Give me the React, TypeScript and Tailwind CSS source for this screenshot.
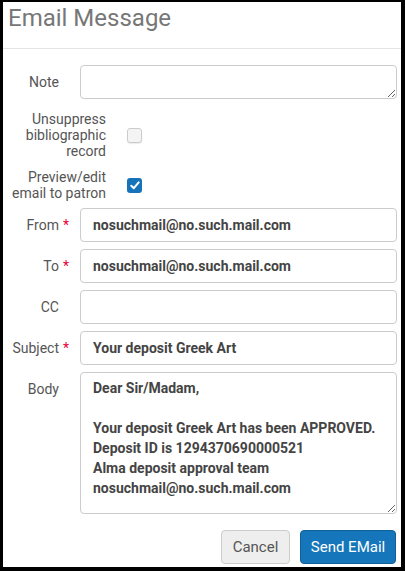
import React from "react";

const font = { fontFamily: "Roboto, 'Liberation Sans', sans-serif" };

function Label({ text, required }: { text: string; required?: boolean }) {
  return (
    <div className="w-[66px] shrink-0 text-right text-[14px] leading-5 text-[#555] pt-[7px]">
      {text}
      <span className={required ? "text-[#e8003a] ml-[4px]" : "invisible ml-[4px]"}>*</span>
    </div>
  );
}

function TextRow({ label, value, required }: { label: string; value: string; required?: boolean }) {
  return (
    <div className="flex gap-[11px]">
      <Label text={label} required={required} />
      <input
        readOnly
        value={value}
        className="h-[34px] flex-1 rounded-[4px] border border-[#ccc] bg-white px-3 text-[14px] font-bold text-[#444] outline-none"
      />
    </div>
  );
}

const bodyText =
  "Dear Sir/Madam,\n\nYour deposit Greek Art has been APPROVED.\nDeposit ID is 1294370690000521\nAlma deposit approval team\nnosuchmail@no.such.mail.com";

export default function App() {
  return (
    <div
      style={font}
      className="w-[405px] h-[571px] border-l-[3px] border-t-2 border-r-4 border-b-4 border-black bg-white flex flex-col"
    >
      <div className="h-[47px] border-b border-[#e5e5e5] pl-[5px] pt-[1px]">
        <h1 className="text-[24px] leading-[30px] text-[#777]">Email Message</h1>
      </div>

      <div className="flex flex-col pr-[4px] pt-[16px]">
        {/* Note */}
        <div className="flex gap-[11px]">
          <Label text="Note" />
          <textarea className="h-[34px] flex-1 rounded-[4px] border border-[#ccc] bg-white px-3 text-[14px] outline-none" />
        </div>

        {/* Unsuppress */}
        <div className="mt-[12px] flex items-center">
          <div className="w-[103px] shrink-0 text-right text-[14px] leading-4 text-[#555]">
            Unsuppress
            <br />
            bibliographic
            <br />
            record
          </div>
          <div className="ml-[21px] h-[15px] w-[15px] rounded-[3px] border border-[#ccc] bg-[#f4f4f4] shadow-[0_1px_1px_rgba(0,0,0,0.08)]" />
        </div>

        {/* Preview */}
        <div className="mt-[10px] flex items-center">
          <div className="w-[103px] shrink-0 text-right text-[14px] leading-4 text-[#555]">
            Preview/edit
            <br />
            email to patron
          </div>
          <div className="ml-[21px] flex h-[15px] w-[15px] items-center justify-center rounded-[3px] bg-[#1673b9]">
            <svg width="10" height="9" viewBox="0 0 10 9" fill="none">
              <path d="M1.3 4.8 3.8 7.2 8.7 1.4" stroke="white" strokeWidth="2" strokeLinecap="round" strokeLinejoin="round" />
            </svg>
          </div>
        </div>

        <div className="mt-[7px] flex flex-col gap-[7px]">
          <TextRow label="From" value="nosuchmail@no.such.mail.com" required />
          <TextRow label="To" value="nosuchmail@no.such.mail.com" required />
          <TextRow label="CC" value="" />
          <TextRow label="Subject" value="Your deposit Greek Art" required />
          <div className="flex gap-[11px]">
            <Label text="Body" />
            <textarea
              readOnly
              defaultValue={bodyText}
              className="h-[142px] flex-1 rounded-[4px] border border-[#ccc] bg-white px-3 py-[5px] text-[14px] leading-5 font-bold text-[#444] outline-none resize-y"
            />
          </div>
        </div>

        <div className="mt-[16px] flex justify-end gap-[10px] pr-[1px]">
          <button className="h-[34px] w-[69px] rounded-[4px] border border-[#ccc] bg-[#eee] text-[15px] text-[#555]">
            Cancel
          </button>
          <button className="h-[34px] w-[96px] rounded-[4px] border border-[#0f5f99] bg-[#1576bb] text-[15px] text-white">
            Send EMail
          </button>
        </div>
      </div>
    </div>
  );
}
